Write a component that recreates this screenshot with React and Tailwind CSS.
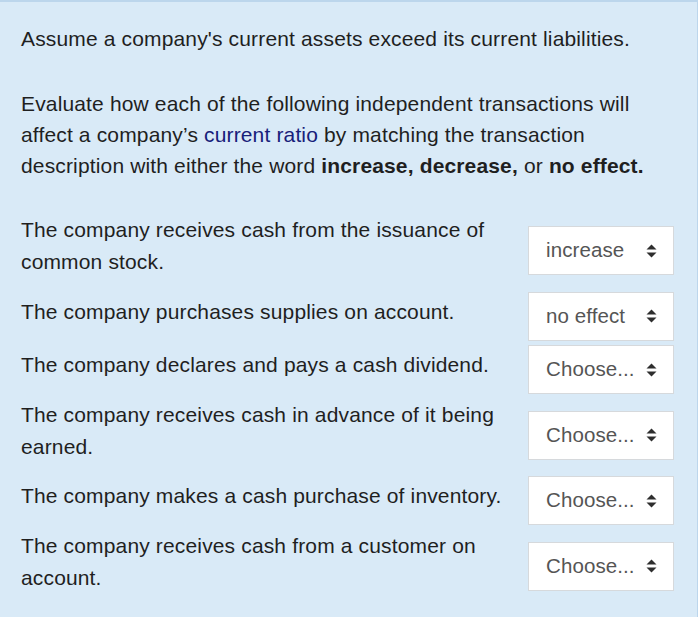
const rows = [
  { lines: ["The company receives cash from the issuance of", "common stock."], value: "increase" },
  { lines: ["The company purchases supplies on account."], value: "no effect" },
  { lines: ["The company declares and pays a cash dividend."], value: "Choose..." },
  { lines: ["The company receives cash in advance of it being", "earned."], value: "Choose..." },
  { lines: ["The company makes a cash purchase of inventory."], value: "Choose..." },
  { lines: ["The company receives cash from a customer on", "account."], value: "Choose..." },
];

function Arrows() {
  return (
    <svg width="11" height="14" viewBox="0 0 11 14" className="shrink-0">
      <path d="M5.5 0.5 L10.5 5.5 L0.5 5.5 Z" fill="#2e2e2e" />
      <path d="M0.5 8.5 L10.5 8.5 L5.5 13.5 Z" fill="#2e2e2e" />
    </svg>
  );
}

function SelectBox({ value }) {
  return (
    <div className="w-[146px] h-[49px] shrink-0 ml-[6px] bg-white border border-[#d6d9dc] flex items-center pl-[17px] pr-[16px] justify-between">
      <span className="text-[20.5px] text-[#555] tracking-[0.1px]">{value}</span>
      <Arrows />
    </div>
  );
}

export default function App() {
  return (
    <div className="w-[700px] h-[619px] bg-white font-['Liberation_Sans',Arial,sans-serif]">
      <div className="w-[698px] h-[617px] bg-[#d9eaf7] border-t-2 border-r border-[#bcd6ec] pl-[21px] pr-[23px] pt-[21px] text-[#1f1f1f] text-[21px] tracking-[0.15px]">
        <p className="leading-[31px] whitespace-nowrap">
          Assume a company's current assets exceed its current liabilities.
        </p>
        <p className="leading-[31px] mt-[34px] whitespace-nowrap">
          Evaluate how each of the following independent transactions will
          <br />
          affect a company’s <span className="text-[#17207a]">current ratio</span> by matching the transaction
          <br />
          description with either the word <b>increase, decrease,</b> or <b>no effect.</b>
        </p>
        <div className="mt-[33px] flex flex-col gap-[4.5px]">
          {rows.map((r, i) => (
            <div key={i} className="flex items-center">
              <div className="flex-1 leading-[32px] pb-[9px] whitespace-nowrap">
                {r.lines.map((l, j) => (
                  <div key={j}>{l}</div>
                ))}
              </div>
              <SelectBox value={r.value} />
            </div>
          ))}
        </div>
      </div>
    </div>
  );
}
